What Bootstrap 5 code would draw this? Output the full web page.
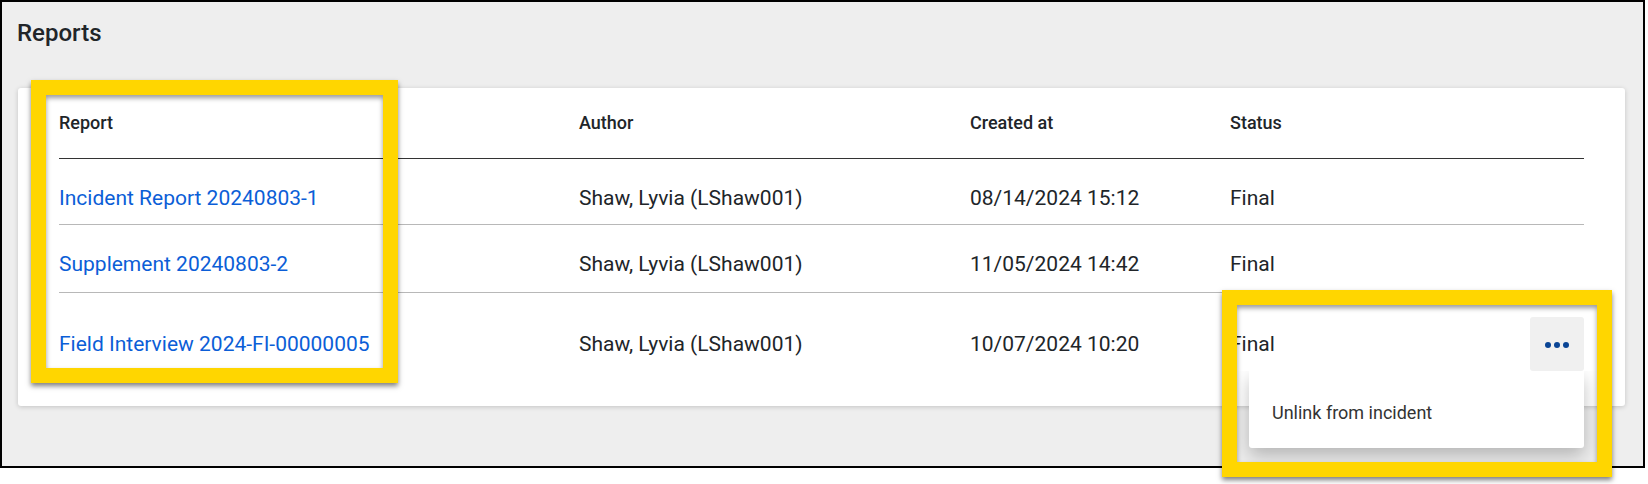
<!DOCTYPE html>
<html lang="en"><head><meta charset="utf-8"><title>Reports</title>
<link href="https://cdn.jsdelivr.net/npm/bootstrap@5.3.0/dist/css/bootstrap.min.css" rel="stylesheet">
<style>
html,body{margin:0;background:#fff;height:484px;overflow:hidden;font-family:Roboto,sans-serif;}
.frame{width:1645px;height:468px;background:#eee;border:2px solid #000;padding:0 16px;position:relative;}
.frame-title{font-size:24px;font-weight:500;line-height:28px;color:#212529;margin:0 0 0 -1px;padding-top:17px;height:86px;}
.panel{background:#fff;height:318px;width:1607px;border-radius:3px;box-shadow:0 1px 5px rgba(0,0,0,.18);padding:0 41px;}
.tbl-row{display:grid;grid-template-columns:520px 391px 260px 1fr;align-items:center;color:#212529;font-size:21px;border-bottom:1px solid #b8b8b8;}
.tbl-head{height:71px;font-size:18px;font-weight:500;border-bottom-color:#333;padding-bottom:2px;}
.r1{height:66px;padding-top:15px}.r2{height:68px;padding-top:13px}.r3{height:112px;border:0;padding-bottom:8px}
.tbl-row a{color:#0b5ed7;text-decoration:none;}
.more-btn{width:54px;height:54px;background:#f0f0f0;border:0;border-radius:3px;padding:0;margin-bottom:2px;}
.status-cell{display:flex;justify-content:space-between;align-items:center;}
.status-cell span{margin-top:0;}
.menu-box{position:absolute;left:1249px;top:371px;width:335px;height:77px;background:#fff;border-radius:0 0 3px 3px;box-shadow:0 8px 18px rgba(0,0,0,.24);clip-path:inset(0 -30px -30px -30px);font-size:18px;color:#333;padding:28px 0 0 23px;line-height:28px;}
.hl{position:absolute;border:15px solid #ffd600;box-shadow:0 3px 5px rgba(0,0,0,.5),inset 0 3px 5px rgba(0,0,0,.4);pointer-events:none;}
.hl-a{left:31px;top:80px;width:367px;height:303px;}
.hl-b{left:1222px;top:290px;width:390px;height:187px;}
</style></head><body>
<div class="frame">
<h2 class="frame-title">Reports</h2>
<div class="panel">
<div class="tbl-row tbl-head"><span>Report</span><span>Author</span><span>Created at</span><span>Status</span></div>
<div class="tbl-row r1"><a href="#">Incident Report 20240803-1</a><span>Shaw, Lyvia (LShaw001)</span><span>08/14/2024 15:12</span><span>Final</span></div>
<div class="tbl-row r2"><a href="#">Supplement 20240803-2</a><span>Shaw, Lyvia (LShaw001)</span><span>11/05/2024 14:42</span><span>Final</span></div>
<div class="tbl-row r3"><a href="#">Field Interview 2024-FI-00000005</a><span>Shaw, Lyvia (LShaw001)</span><span>10/07/2024 10:20</span><div class="status-cell"><span>Final</span><button class="more-btn" aria-label="More"><svg width="24" height="6" viewBox="0 0 24 6"><circle cx="3" cy="3" r="3" fill="#0a4595"/><circle cx="12" cy="3" r="3" fill="#0a4595"/><circle cx="21" cy="3" r="3" fill="#0a4595"/></svg></button></div></div>
</div>
</div>
<div class="menu-box">Unlink from incident</div>
<div class="hl hl-a"></div>
<div class="hl hl-b"></div>
<script src="https://cdn.jsdelivr.net/npm/bootstrap@5.3.0/dist/js/bootstrap.bundle.min.js"></script>
</body></html>
